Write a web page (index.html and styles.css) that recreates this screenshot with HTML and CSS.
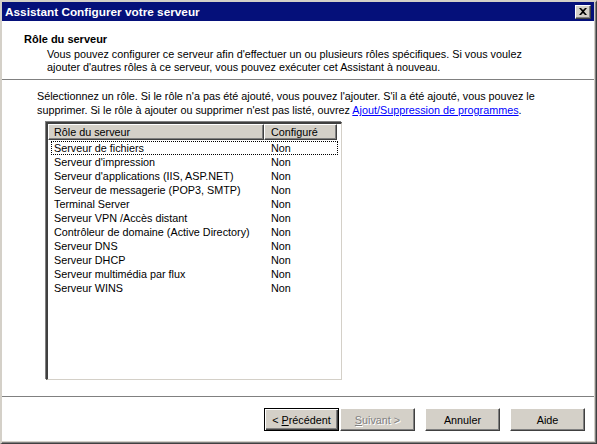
FILE: index.html
```html
<!DOCTYPE html>
<html lang="fr">
<head>
<meta charset="utf-8">
<title>Assistant Configurer votre serveur</title>
<link rel="stylesheet" href="styles.css">
</head>
<body>
<div class="window">
  <div class="titlebar">
    <span class="title">Assistant Configurer votre serveur</span>
    <span class="close"><svg width="8" height="7" viewBox="0 0 8 7"><path d="M0 0h2l2 2 2-2h2L5 3.5 8 7H6L4 5 2 7H0l3-3.5z" fill="#000"/></svg></span>
  </div>
  <div class="header">
    <div class="h-title">Rôle du serveur</div>
    <div class="h-desc">Vous pouvez configurer ce serveur afin d'effectuer un ou plusieurs rôles spécifiques. Si vous voulez<br>ajouter d'autres rôles à ce serveur, vous pouvez exécuter cet Assistant à nouveau.</div>
  </div>
  <div class="main">
    <p class="intro">Sélectionnez un rôle. Si le rôle n'a pas été ajouté, vous pouvez l'ajouter. S'il a été ajouté, vous pouvez le<br>supprimer. Si le rôle à ajouter ou supprimer n'est pas listé, ouvrez <a class="link" href="#">Ajout/Suppression de programmes</a>.</p>
    <div class="list">
      <div class="list-head">
        <div class="col1 hcell">Rôle du serveur</div>
        <div class="col2 hcell">Configuré</div>
      </div>
      <div class="rows">
        <div class="row focus"><span class="col1">Serveur de fichiers</span><span class="col2">Non</span></div>
        <div class="row"><span class="col1">Serveur d'impression</span><span class="col2">Non</span></div>
        <div class="row"><span class="col1">Serveur d'applications (IIS, ASP.NET)</span><span class="col2">Non</span></div>
        <div class="row"><span class="col1">Serveur de messagerie (POP3, SMTP)</span><span class="col2">Non</span></div>
        <div class="row"><span class="col1">Terminal Server</span><span class="col2">Non</span></div>
        <div class="row"><span class="col1">Serveur VPN /Accès distant</span><span class="col2">Non</span></div>
        <div class="row"><span class="col1">Contrôleur de domaine (Active Directory)</span><span class="col2">Non</span></div>
        <div class="row"><span class="col1">Serveur DNS</span><span class="col2">Non</span></div>
        <div class="row"><span class="col1">Serveur DHCP</span><span class="col2">Non</span></div>
        <div class="row"><span class="col1">Serveur multimédia par flux</span><span class="col2">Non</span></div>
        <div class="row"><span class="col1">Serveur WINS</span><span class="col2">Non</span></div>
      </div>
    </div>
  </div>
  <div class="footer">
    <button class="btn default">&lt; <u>P</u>récédent</button>
    <button class="btn disabled"><u>S</u>uivant &gt;</button>
    <button class="btn gap">Annuler</button>
    <button class="btn gap">Aide</button>
  </div>
</div>
</body>
</html>
```
FILE: styles.css
```css
html, body {
  margin: 0;
  padding: 0;
  background: #ffffff;
}
body {
  font-family: "Liberation Sans", Arial, sans-serif;
  font-size: 10.8px;
  color: #000;
}
.window {
  width: 597px;
  height: 444px;
  box-sizing: border-box;
  border-top: 2px solid #d4d0c8;
  border-left: 2px solid #d4d0c8;
  border-right: 1px solid #404040;
  border-bottom: 1px solid #404040;
  box-shadow: inset -1px -1px 0 #808080, inset -2px -2px 0 #d4d0c8;
  display: flex;
  flex-direction: column;
  background: #fff;
}
.titlebar {
  height: 19px;
  background: #05107a;
  display: flex;
  align-items: center;
  justify-content: space-between;
  padding: 0 3px 0 3px;
  margin-right: 2px;
}
.title {
  color: #fff;
  font-weight: bold;
  font-size: 11.8px;
}
.close {
  width: 16px;
  height: 14px;
  box-sizing: border-box;
  background: #d4d0c8;
  border-top: 1px solid #fff;
  border-left: 1px solid #fff;
  border-right: 1px solid #404040;
  border-bottom: 1px solid #404040;
  box-shadow: inset -1px -1px 0 #808080;
  display: flex;
  align-items: center;
  justify-content: center;
}
.header {
  padding: 12px 0 6px 22px;
  border-bottom: 1px solid #808080;
  margin-right: 2px;
  height: 59px;
  box-sizing: border-box;
}
.h-title {
  font-weight: bold;
  font-size: 11px;
  line-height: 13px;
}
.h-desc {
  margin-left: 23px;
  line-height: 12.5px;
  margin-top: 2px;
}
.main {
  flex: 1;
  padding: 9px 0 0 35px;
  border-bottom: 1px solid #808080;
  margin-right: 2px;
}
.intro {
  margin: 0;
  line-height: 14px;
}
.link {
  color: #0000ff;
  text-decoration: underline;
}
.list {
  margin: 5px 0 0 9px;
  width: 296px;
  height: 258px;
  box-sizing: border-box;
  border-top: 2px solid #404040;
  border-left: 2px solid #404040;
  border-right: 1px solid #d4d0c8;
  border-bottom: 1px solid #d4d0c8;
  box-shadow: -1px -1px 0 #808080;
  background: #fff;
}
.list-head {
  display: flex;
  height: 16px;
}
.hcell {
  box-sizing: border-box;
  background: #d4d0c8;
  border-top: 1px solid #fff;
  border-left: 1px solid #fff;
  border-right: 1px solid #404040;
  border-bottom: 1px solid #404040;
  box-shadow: inset -1px -1px 0 #808080;
  line-height: 14px;
  padding-left: 5px;
}
.list-head .col1 { width: 216px; }
.list-head .col2 { width: 73px; padding-left: 6px; }
.rows {
  padding-top: 1px;
}
.row {
  display: flex;
  height: 14px;
  line-height: 14px;
  margin: 0 2px 0 3px;
  box-sizing: border-box;
}
.row .col1 { width: 220px; padding-left: 3px; box-sizing: border-box; }
.row .col2 { width: 60px; }
.focus {
  outline: 1px dotted #000;
  outline-offset: -1px;
  width: 287px;
}
.footer {
  height: 46px;
  box-sizing: border-box;
  padding: 11px 11px 0 0;
  display: flex;
  justify-content: flex-end;
  align-items: flex-start;
}
.btn {
  width: 75px;
  height: 23px;
  box-sizing: border-box;
  font-family: "Liberation Sans", Arial, sans-serif;
  font-size: 10.8px;
  background: #d4d0c8;
  border-top: 1px solid #fff;
  border-left: 1px solid #fff;
  border-right: 1px solid #404040;
  border-bottom: 1px solid #404040;
  box-shadow: inset -1px -1px 0 #808080;
  padding: 0;
  color: #000;
  margin-left: 1px;
}
.btn.default {
  border: 1px solid #000;
  box-shadow: inset 1px 1px 0 #fff, inset -1px -1px 0 #404040, inset -2px -2px 0 #808080;
}
.btn.disabled {
  color: #808080;
  text-shadow: 1px 1px 0 #fff;
}
.btn.gap {
  margin-left: 10px;
}
```
